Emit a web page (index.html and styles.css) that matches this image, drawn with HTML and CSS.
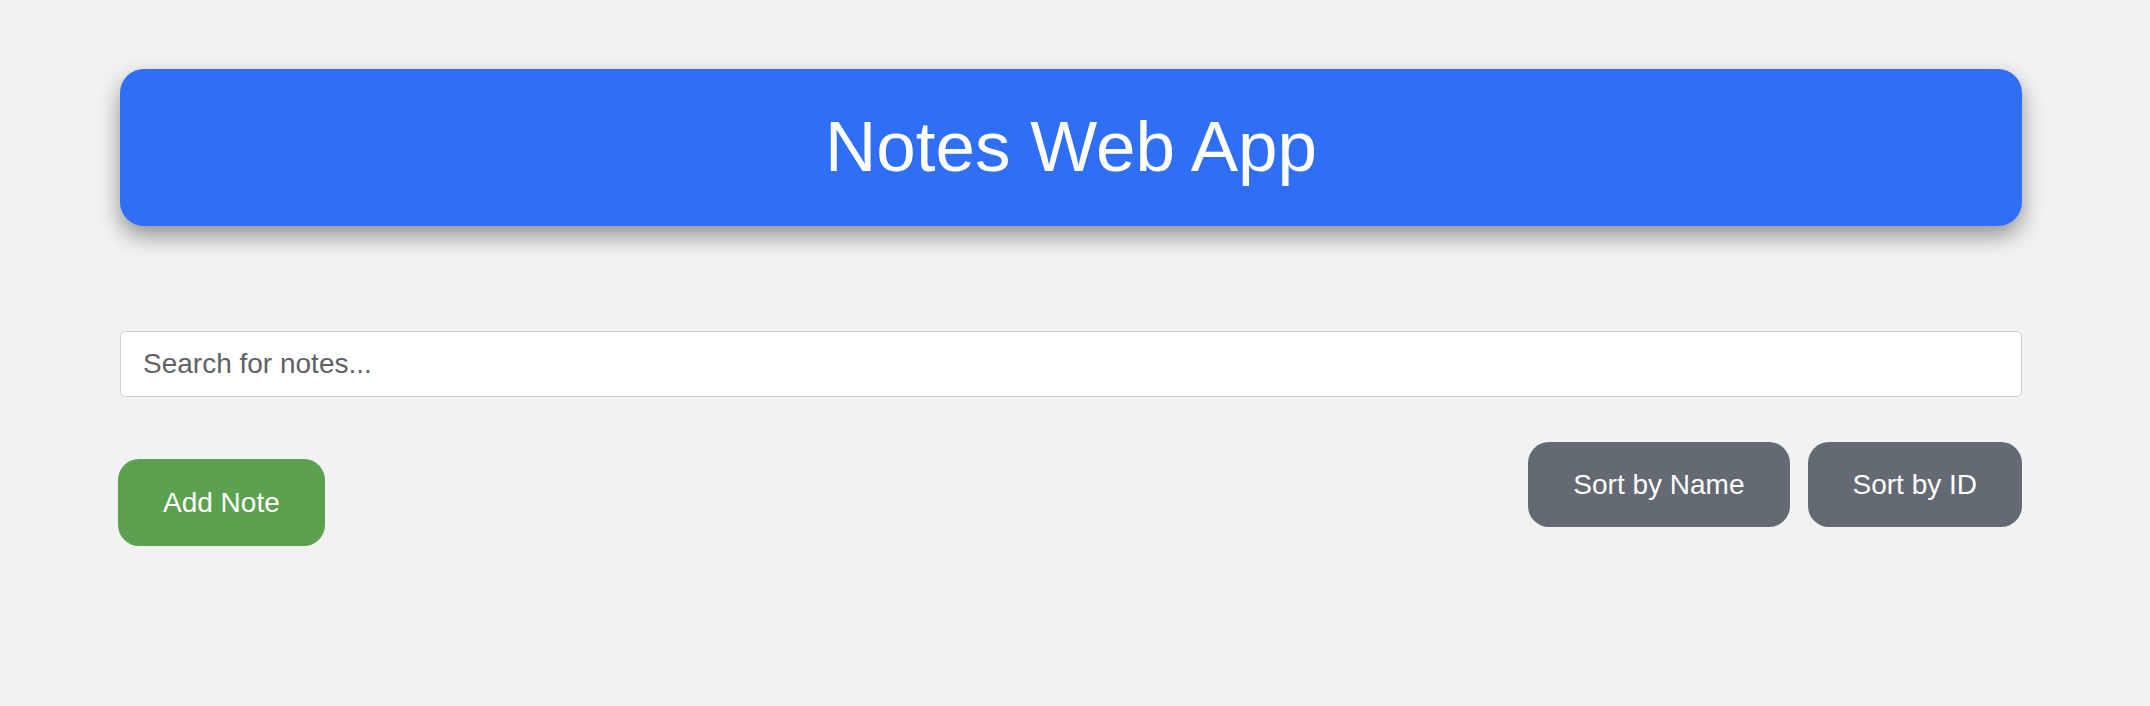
FILE: index.html
```html
<!DOCTYPE html>
<html lang="en">
<head>
<meta charset="utf-8">
<title>Notes Web App</title>
<link rel="stylesheet" href="styles.css">
</head>
<body>
<div class="app">
  <header class="app-header">
    <h1 class="app-title">Notes Web App</h1>
  </header>
  <input class="search" type="text" placeholder="Search for notes...">
  <div class="toolbar">
    <button class="btn btn-add">Add Note</button>
    <div class="sort-group">
      <button class="btn btn-sort">Sort by Name</button>
      <button class="btn btn-sort">Sort by ID</button>
    </div>
  </div>
</div>
</body>
</html>
```

FILE: styles.css
```css
html, body {
  margin: 0;
  padding: 0;
  background: #f2f2f2;
  font-family: "Liberation Sans", Arial, sans-serif;
}

.app {
  width: 1902px;
  margin-left: 120px;
  padding-top: 69px;
}

.app-header {
  height: 157px;
  box-sizing: border-box;
  background: #2f6ff6;
  border-radius: 24px;
  display: flex;
  align-items: center;
  justify-content: center;
  box-shadow: 0 10px 22px rgba(0, 0, 0, 0.4);
}

.app-title {
  margin: 0;
  font-size: 71px;
  font-weight: normal;
  color: #ffffff;
  line-height: 1;
  position: relative;
  top: -1px;
}

.search {
  display: block;
  width: 100%;
  box-sizing: border-box;
  margin-top: 105px;
  height: 66px;
  padding: 0 22px;
  border: 1.5px solid #d0d1d7;
  border-radius: 5px;
  background: #ffffff;
  font-family: "Liberation Sans", Arial, sans-serif;
  font-size: 28px;
  color: #333;
  outline: none;
}

.search::placeholder {
  color: #5f6166;
}

.toolbar {
  display: flex;
  justify-content: space-between;
  align-items: flex-start;
  margin-top: 45px;
}

.btn {
  border: none;
  color: #ffffff;
  font-family: "Liberation Sans", Arial, sans-serif;
  font-size: 28px;
  padding: 0 45px;
  border-radius: 21px;
  cursor: pointer;
}

.btn-add {
  margin-top: 17px;
  margin-left: -2px;
  height: 87px;
  background: #5ba150;
}

.sort-group {
  display: flex;
  gap: 18px;
}

.btn-sort {
  height: 85px;
  background: #646a73;
}
```
